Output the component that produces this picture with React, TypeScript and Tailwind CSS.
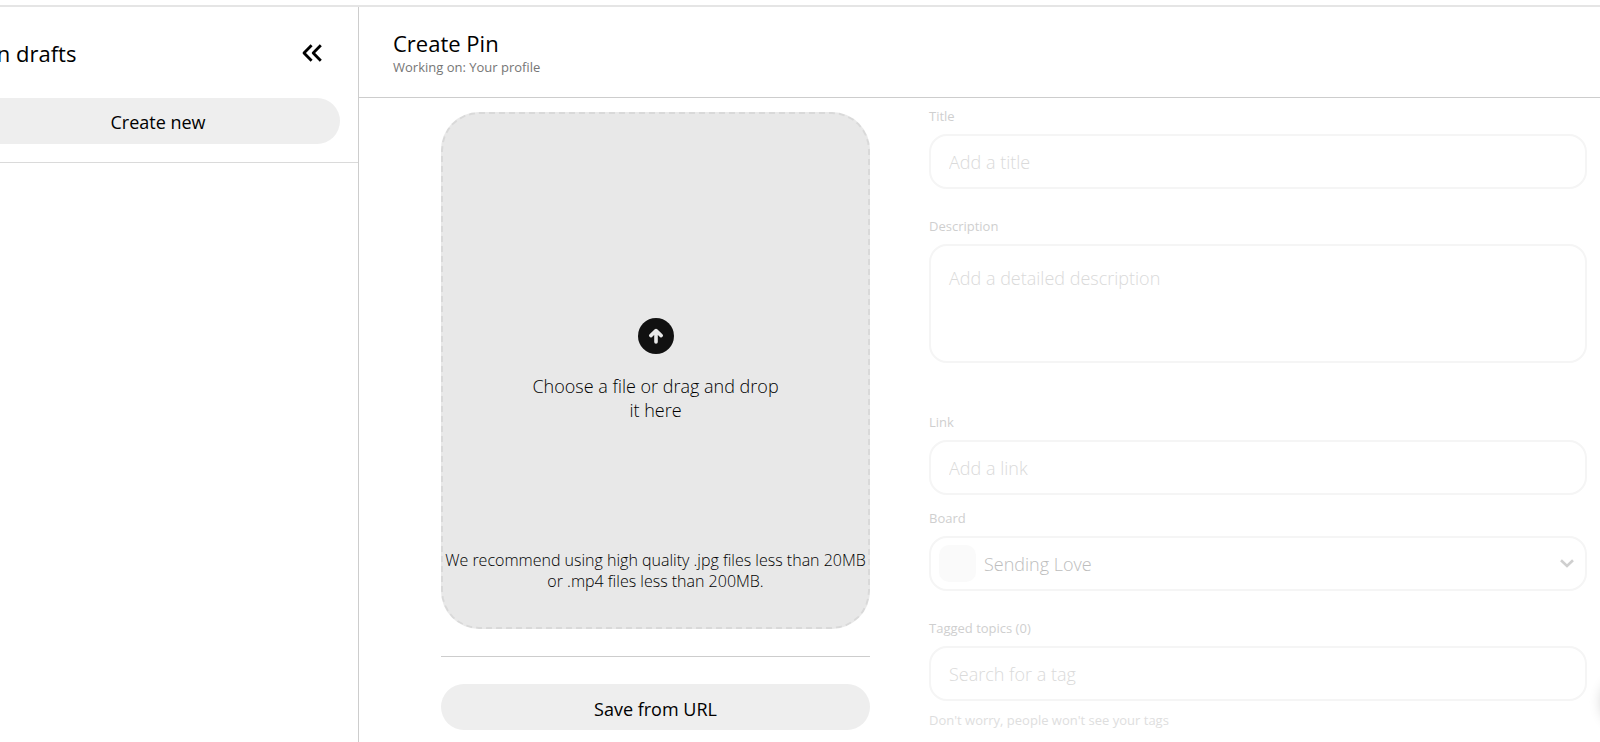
import { ReactNode } from "react";

const field =
  "block w-full rounded-[18px] border-2 border-[#f5f5f5] bg-transparent px-[18px] text-lg font-light text-[#bdbdbd] outline-none placeholder:text-[#dadada] placeholder:opacity-100";

function Field({ id, label, children }: { id: string; label: string; children: ReactNode }) {
  return (
    <div>
      <label htmlFor={id} className="mb-2 block text-[13px] leading-5 text-[#cfcfcf]">
        {label}
      </label>
      {children}
    </div>
  );
}

function Sidebar() {
  return (
    <aside className="-ml-[42px] w-[401px] shrink-0 border-r border-[#cdcdcd]">
      <div className="border-b border-[#dadada] px-[18px] pb-[18px]">
        <div className="flex h-[91px] items-center justify-between pr-[14px] pl-0.5">
          <h2 className="text-[22px] leading-8">Pin drafts</h2>
          <button type="button" aria-label="Collapse drafts" className="p-1">
            <svg viewBox="0 0 20 18" className="h-[18px] w-5" fill="none" stroke="#000" strokeWidth="2.8">
              <path d="M9.6 1.2 2 9l7.6 7.8M18.8 1.2 11.2 9l7.6 7.8" strokeLinejoin="round" />
            </svg>
          </button>
        </div>
        <button type="button" className="h-[46px] w-full rounded-full bg-[#eee] pt-0.5 text-lg font-medium">
          Create new
        </button>
      </div>
    </aside>
  );
}

function Uploader() {
  return (
    <section className="w-[429px] shrink-0 pt-[14px]">
      <button
        type="button"
        className="flex h-[517px] w-full flex-col items-center rounded-[38px] border-2 border-dashed border-[#d9d9d9] bg-[#e8e8e8] pt-[204px] pb-[35px] font-light text-black"
      >
        <svg viewBox="0 0 36 36" className="size-9">
          <circle cx="18" cy="18" r="18" fill="#111" />
          <path d="M18 24V13.5M12.8 17.6 18 12.6l5.2 5" fill="none" stroke="#e8e8e8" strokeWidth="3.6" strokeLinecap="round" strokeLinejoin="round" />
        </svg>
        <span className="mt-5 w-[256px] text-lg leading-6">Choose a file or drag and drop it here</span>
        <span className="mt-auto whitespace-nowrap text-base leading-[21px]">
          We recommend using high quality .jpg files less than 20MB
          <br />
          or .mp4 files less than 200MB.
        </span>
      </button>
      <hr className="my-[27px] border-[#cdcdcd]" />
      <button type="button" className="h-[46px] w-full rounded-full bg-[#eee] pt-1 text-lg font-medium">
        Save from URL
      </button>
    </section>
  );
}

function PinForm() {
  return (
    <form className="min-w-0 flex-1 pt-2">
      <Field id="title" label="Title">
        <input id="title" type="text" placeholder="Add a title" className={`${field} h-[55px]`} />
      </Field>
      <div className="mt-[27px]">
        <Field id="description" label="Description">
          <textarea id="description" placeholder="Add a detailed description" className={`${field} h-[119px] resize-none pt-[18px]`} />
        </Field>
      </div>
      <div className="mt-[49px]">
        <Field id="link" label="Link">
          <input id="link" type="text" placeholder="Add a link" className={`${field} h-[55px]`} />
        </Field>
      </div>
      <div className="mt-[13px]">
        <Field id="board" label="Board">
          <div className="relative">
            <select id="board" className={`${field} h-[55px] appearance-none pl-[53px]`}>
              <option>Sending Love</option>
            </select>
            <span className="pointer-events-none absolute top-[9px] left-[10px] size-[37px] rounded-[10px] bg-[#fafafa]" />
            <svg viewBox="0 0 14 9" className="pointer-events-none absolute top-[23px] right-[13px] h-[9px] w-[14px]" fill="none" stroke="#cfcfcf" strokeWidth="2.6">
              <path d="m1 1.2 6 5.8 6-5.8" />
            </svg>
          </div>
        </Field>
      </div>
      <div className="mt-[27px]">
        <Field id="tags" label="Tagged topics (0)">
          <input id="tags" type="text" placeholder="Search for a tag" className={`${field} h-[55px]`} />
        </Field>
      </div>
      <p className="mt-[9px] text-[13px] leading-5 text-[#dedede]">Don't worry, people won't see your tags</p>
    </form>
  );
}

export default function App() {
  return (
    <div className="relative flex h-screen flex-col overflow-hidden bg-white pt-[5px] font-['Open_Sans','Noto_Sans',sans-serif] text-black">
      <div className="flex min-h-0 flex-1 border-t-2 border-[#e5e5e5]">
        <Sidebar />
        <main className="min-w-0 flex-1">
          <header className="flex h-[91px] flex-col justify-center border-b border-[#cdcdcd] px-[34px] pt-0.5">
            <h1 className="text-[22px] leading-7">Create Pin</h1>
            <p className="text-[13px] leading-5 text-[#767676]">Working on: Your profile</p>
          </header>
          <div className="flex gap-[59px] pr-[13px] pl-[82px]">
            <Uploader />
            <PinForm />
          </div>
        </main>
      </div>
      {/* help bubble is tucked past the edge, only its shadow shows */}
      <button type="button" aria-label="Help" className="absolute -right-[50px] bottom-4 size-12 rounded-full bg-white shadow-[0_0_14px_rgba(0,0,0,0.2)]" />
    </div>
  );
}
